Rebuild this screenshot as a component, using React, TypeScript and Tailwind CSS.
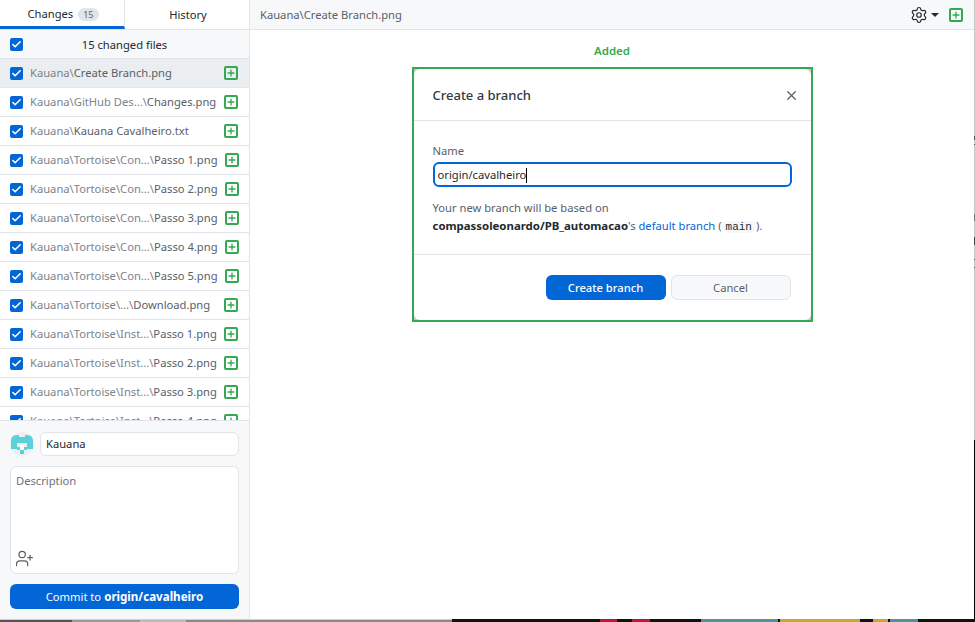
import { Check, Plus, Settings, UserPlus, X } from 'lucide-react';

const files = [
  { dir: 'Kauana\\', name: 'Create Branch.png', selected: true },
  { dir: 'Kauana\\GitHub Des...\\', name: 'Changes.png' },
  { dir: 'Kauana\\', name: 'Kauana Cavalheiro.txt' },
  { dir: 'Kauana\\Tortoise\\Con...\\', name: 'Passo 1.png' },
  { dir: 'Kauana\\Tortoise\\Con...\\', name: 'Passo 2.png' },
  { dir: 'Kauana\\Tortoise\\Con...\\', name: 'Passo 3.png' },
  { dir: 'Kauana\\Tortoise\\Con...\\', name: 'Passo 4.png' },
  { dir: 'Kauana\\Tortoise\\Con...\\', name: 'Passo 5.png' },
  { dir: 'Kauana\\Tortoise\\...\\', name: 'Download.png' },
  { dir: 'Kauana\\Tortoise\\Inst...\\', name: 'Passo 1.png' },
  { dir: 'Kauana\\Tortoise\\Inst...\\', name: 'Passo 2.png' },
  { dir: 'Kauana\\Tortoise\\Inst...\\', name: 'Passo 3.png' },
  { dir: 'Kauana\\Tortoise\\Inst...\\', name: 'Passo 4.png' },
];

function Tick() {
  return (
    <span className="flex h-[13px] w-[13px] shrink-0 items-center justify-center rounded-[2px] bg-[#0366d6]">
      <Check className="h-[11px] w-[11px] text-white" strokeWidth={3.5} />
    </span>
  );
}

function AddedIcon() {
  return (
    <span className="flex h-[14px] w-[14px] shrink-0 items-center justify-center rounded-[2px] border-2 border-[#34a853]">
      <Plus className="h-[10px] w-[10px] text-[#34a853]" strokeWidth={3.2} />
    </span>
  );
}

function Avatar() {
  return (
    <svg width="24" height="24" viewBox="0 0 24 24" className="shrink-0">
      <circle cx="12" cy="12" r="12" fill="#ecefef" />
      <path d="M1 9Q1 3 7 3H9V5H15V3H17Q23 3 23 9V17H17V11H7V17H1Z" fill="#5ad1d8" />
      <rect x="10" y="13" width="4" height="4" fill="#ffffff" />
      <rect x="10" y="18" width="4" height="4" fill="#5ad1d8" />
      <rect x="7" y="15" width="3" height="3" fill="#5ad1d8" />
      <rect x="14" y="15" width="3" height="3" fill="#5ad1d8" />
    </svg>
  );
}

export default function App() {
  return (
    <div className="flex h-[622px] w-[975px] flex-col overflow-hidden bg-white font-['Noto_Sans',sans-serif] text-[11.2px] text-[#24292e]">
      <div className="flex h-[619px] shrink-0">
        {/* Sidebar */}
        <div className="flex w-[250px] shrink-0 flex-col border-r border-[#e1e4e8]">
          <div className="flex h-[30px] shrink-0 border-b border-[#e1e4e8]">
            <div className="flex w-[125px] items-center justify-center gap-[5px] border-r border-b-[3px] border-r-[#e1e4e8] border-b-[#0366d6] pl-[2px] pt-[2px]">
              Changes
              <span className="rounded-full bg-[#e1e4e8] px-[5px] text-[9px] leading-[13px] text-[#586069]">15</span>
            </div>
            <div className="flex flex-1 items-center justify-center pl-[2px] pt-[2px]">History</div>
          </div>
          <div className="flex h-[29px] shrink-0 items-center border-b border-[#e1e4e8] bg-[#f6f8fa] pl-[10px] pr-[10px]">
            <Tick />
            <span className="flex-1 pr-[13px] pt-[2px] text-center">15 changed files</span>
          </div>
          <div className="h-[361px] shrink-0 overflow-hidden">
            {files.map((f, i) => (
              <div
                key={i}
                className={`flex h-[29px] items-center gap-[7px] border-b border-[#e1e4e8] pl-[10px] pr-[11px] ${f.selected ? 'bg-[#ebeef1]' : ''}`}
              >
                <Tick />
                <span className="flex-1 whitespace-nowrap pt-[1px] text-[#7b838b]">
                  {f.dir}
                  <span className="text-[#586069]">{f.name}</span>
                </span>
                <AddedIcon />
              </div>
            ))}
          </div>
          <div className="flex flex-1 flex-col gap-[10px] border-t border-[#e1e4e8] bg-[#f6f8fa] px-[10px] pt-[11px]">
            <div className="flex items-center gap-[6px]">
              <Avatar />
              <div className="flex h-[24px] flex-1 items-center rounded-[6px] border border-[#e1e4e8] bg-white px-[5px] pt-[1px]">Kauana</div>
            </div>
            <div className="flex h-[108px] flex-col justify-between rounded-[6px] border border-[#e1e4e8] bg-white px-[5px] pb-[5px] pt-[6px] text-[#6a737d]">
              Description
              <UserPlus className="-ml-px h-[19px] w-[19px] text-[#586069]" strokeWidth={1.5} />
            </div>
            <div className="flex h-[25px] items-center justify-center gap-[3px] rounded-[6px] bg-[#0366d6] pt-[1px] text-white">
              Commit to <b className="text-[11.6px]">origin/cavalheiro</b>
            </div>
          </div>
        </div>

        {/* Main */}
        <div className="flex flex-1 flex-col">
          <div className="flex h-[30px] shrink-0 items-center border-b border-[#e1e4e8] bg-[#f6f8fa] pl-[10px] pr-[11px] text-[#586069]">
            <span className="flex-1 pt-[2px]">Kauana\Create Branch.png</span>
            <Settings className="h-[18px] w-[18px] text-[#24292e]" strokeWidth={1.6} />
            <svg width="8" height="4" viewBox="0 0 8 4" className="ml-[3px]">
              <path d="M0 0H8L4 4Z" fill="#24292e" />
            </svg>
            <span className="ml-[10px]">
              <AddedIcon />
            </span>
          </div>
          <div className="flex flex-col items-center">
            <div className="mb-[8px] mt-[12px] text-[11.5px] font-semibold text-[#34a853]">Added</div>
            <div className="h-[255px] w-[401px] border-2 border-[#34a853] bg-[#c9c9c9]">
              <div className="flex h-full flex-col rounded-[6px] bg-white">
                <div className="flex h-[52px] shrink-0 items-center justify-between border-b border-[#e1e4e8] pl-[19px] pr-[12px] pt-[2px] text-[13px] font-medium text-[#333a40]">
                  Create a branch
                  <X className="h-[15px] w-[15px] text-[#586069]" strokeWidth={2} />
                </div>
                <div className="h-[134px] shrink-0 border-b border-[#e1e4e8] px-[19px] pt-[22px]">
                  <div className="text-[#586069]">Name</div>
                  <div className="mt-[2px] flex h-[25px] items-center rounded-[6px] border-2 border-[#0366d6] px-[3px] pt-[1px] text-[#24292e]">
                    origin/cavalheiro
                    <span className="h-[15px] w-px bg-black" />
                  </div>
                  <div className="mt-[12px] leading-[18px] text-[#586069]">
                    Your new branch will be based on
                    <br />
                    <span className="text-[11.4px] font-bold text-[#24292e]">compassoleonardo/PB_automacao</span>'s{' '}
                    <span className="text-[#0366d6]">default branch</span> (
                    <code className="rounded-[6px] bg-[#f6f8fa] px-[4px] font-['Liberation_Mono',monospace] text-[11px] text-[#24292e]">main</code>).
                  </div>
                </div>
                <div className="flex flex-1 items-start justify-end gap-[5px] px-[20px] pt-[20px]">
                  <div className="flex h-[25px] w-[120px] items-center justify-center rounded-[6px] bg-[#0366d6] pt-[1px] font-medium text-white">Create branch</div>
                  <div className="flex h-[25px] w-[120px] items-center justify-center rounded-[6px] border border-[#e1e4e8] bg-[#f6f8fa] pt-[1px] text-[#586069]">Cancel</div>
                </div>
              </div>
            </div>
          </div>
        </div>

        {/* Window edge, with the desktop showing through in places */}
        <div className="flex w-px shrink-0 flex-col bg-[#c8c8c8]">
          <div className="mt-[136px] h-[4px] bg-[#555]" />
          <div className="mt-[4px] h-px bg-[#555]" />
          <div className="mt-[69px] h-[7px] bg-[#777]" />
          <div className="mt-[16px] h-[8px] bg-[#444]" />
          <div className="mt-[14px] h-px bg-[#555]" />
          <div className="mt-[7px] h-px bg-[#555]" />
          <div className="mt-[172px] flex-1 bg-black" />
        </div>
      </div>

      {/* Desktop peeking out under the window */}
      <div className="flex h-[3px] shrink-0 bg-[#111]">
        <div className="flex h-full w-[452px] flex-col">
          <div className="h-px bg-[#cfcfcf]" />
          <div className="flex h-[2px]">
            <div className="w-[72px] bg-[#555]" />
            <div className="w-[68px] bg-[#999]" />
            <div className="w-[46px] bg-[#bbb]" />
            <div className="flex-1 bg-[#8a8a8a]" />
          </div>
        </div>
        <div className="ml-[148px] h-full w-[17px] bg-[#c2183f]" />
        <div className="ml-[15px] h-full w-[18px] bg-[#c2183f]" />
        <div className="ml-[51px] h-full w-[77px] bg-[#4f93a8]" />
        <div className="ml-[2px] h-full w-[80px] bg-[#c8a92e]" />
        <div className="ml-[13px] h-full w-[15px] bg-[#c8a92e]" />
        <div className="ml-[2px] h-full w-[28px] bg-[#4f93a8]" />
      </div>
    </div>
  );
}
